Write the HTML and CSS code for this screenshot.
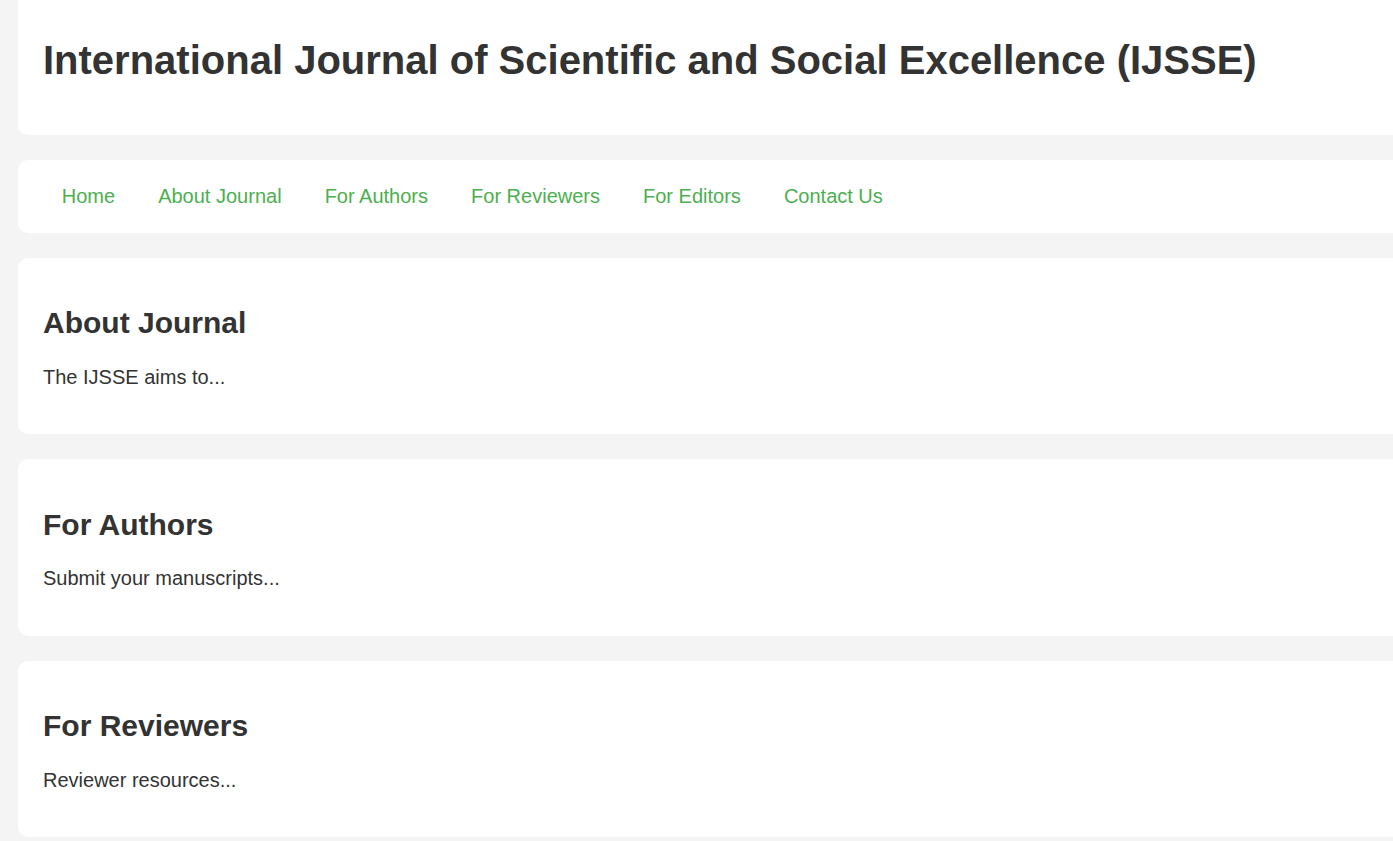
FILE: index.html
```html
<!DOCTYPE html>
<html lang="en">
<head>
<meta charset="utf-8">
<title>IJSSE</title>
<link rel="stylesheet" href="styles.css">
</head>
<body>
<div class="page">
  <header class="card header">
    <h1 class="title">International Journal of Scientific and Social Excellence (IJSSE)</h1>
  </header>
  <nav class="card nav">
    <a class="nav-link" href="#">Home</a>
    <a class="nav-link" href="#about">About Journal</a>
    <a class="nav-link" href="#authors">For Authors</a>
    <a class="nav-link" href="#reviewers">For Reviewers</a>
    <a class="nav-link" href="#">For Editors</a>
    <a class="nav-link" href="#">Contact Us</a>
  </nav>
  <section class="card section" id="about">
    <h2 class="section-title">About Journal</h2>
    <p class="section-text">The IJSSE aims to...</p>
  </section>
  <section class="card section" id="authors">
    <h2 class="section-title">For Authors</h2>
    <p class="section-text">Submit your manuscripts...</p>
  </section>
  <section class="card section" id="reviewers">
    <h2 class="section-title">For Reviewers</h2>
    <p class="section-text">Reviewer resources...</p>
  </section>
</div>
</body>
</html>
```

FILE: styles.css
```css
html, body {
  margin: 0;
  padding: 0;
  overflow-x: hidden;
}

body {
  background: #f4f4f4;
  color: #333333;
  font-family: "Liberation Sans", Arial, sans-serif;
  font-size: 20px;
  line-height: 1.149;
}

.page {
  padding: 0 0 0 18px;
}

.card {
  background: #ffffff;
  border-radius: 10px;
  margin: 0 -60px 25px 0;
  padding: 25px;
}

.header {
  border-radius: 0 0 10px 10px;
  padding-top: 10px;
}

.title {
  font-size: 40px;
  font-weight: bold;
  margin: 26.8px 0;
  line-height: 46px;
}

.nav {
  display: flex;
  gap: 5.56px;
  padding: 25px;
}

.nav-link {
  color: #4caf50;
  text-decoration: none;
  padding: 0 18.75px;
  line-height: 23px;
}

.section-title {
  font-size: 30px;
  font-weight: bold;
  margin: 23.5px 0 25px;
  line-height: 34.5px;
}

.section-text {
  margin: 0 0 20.5px;
  line-height: 23px;
}
```
